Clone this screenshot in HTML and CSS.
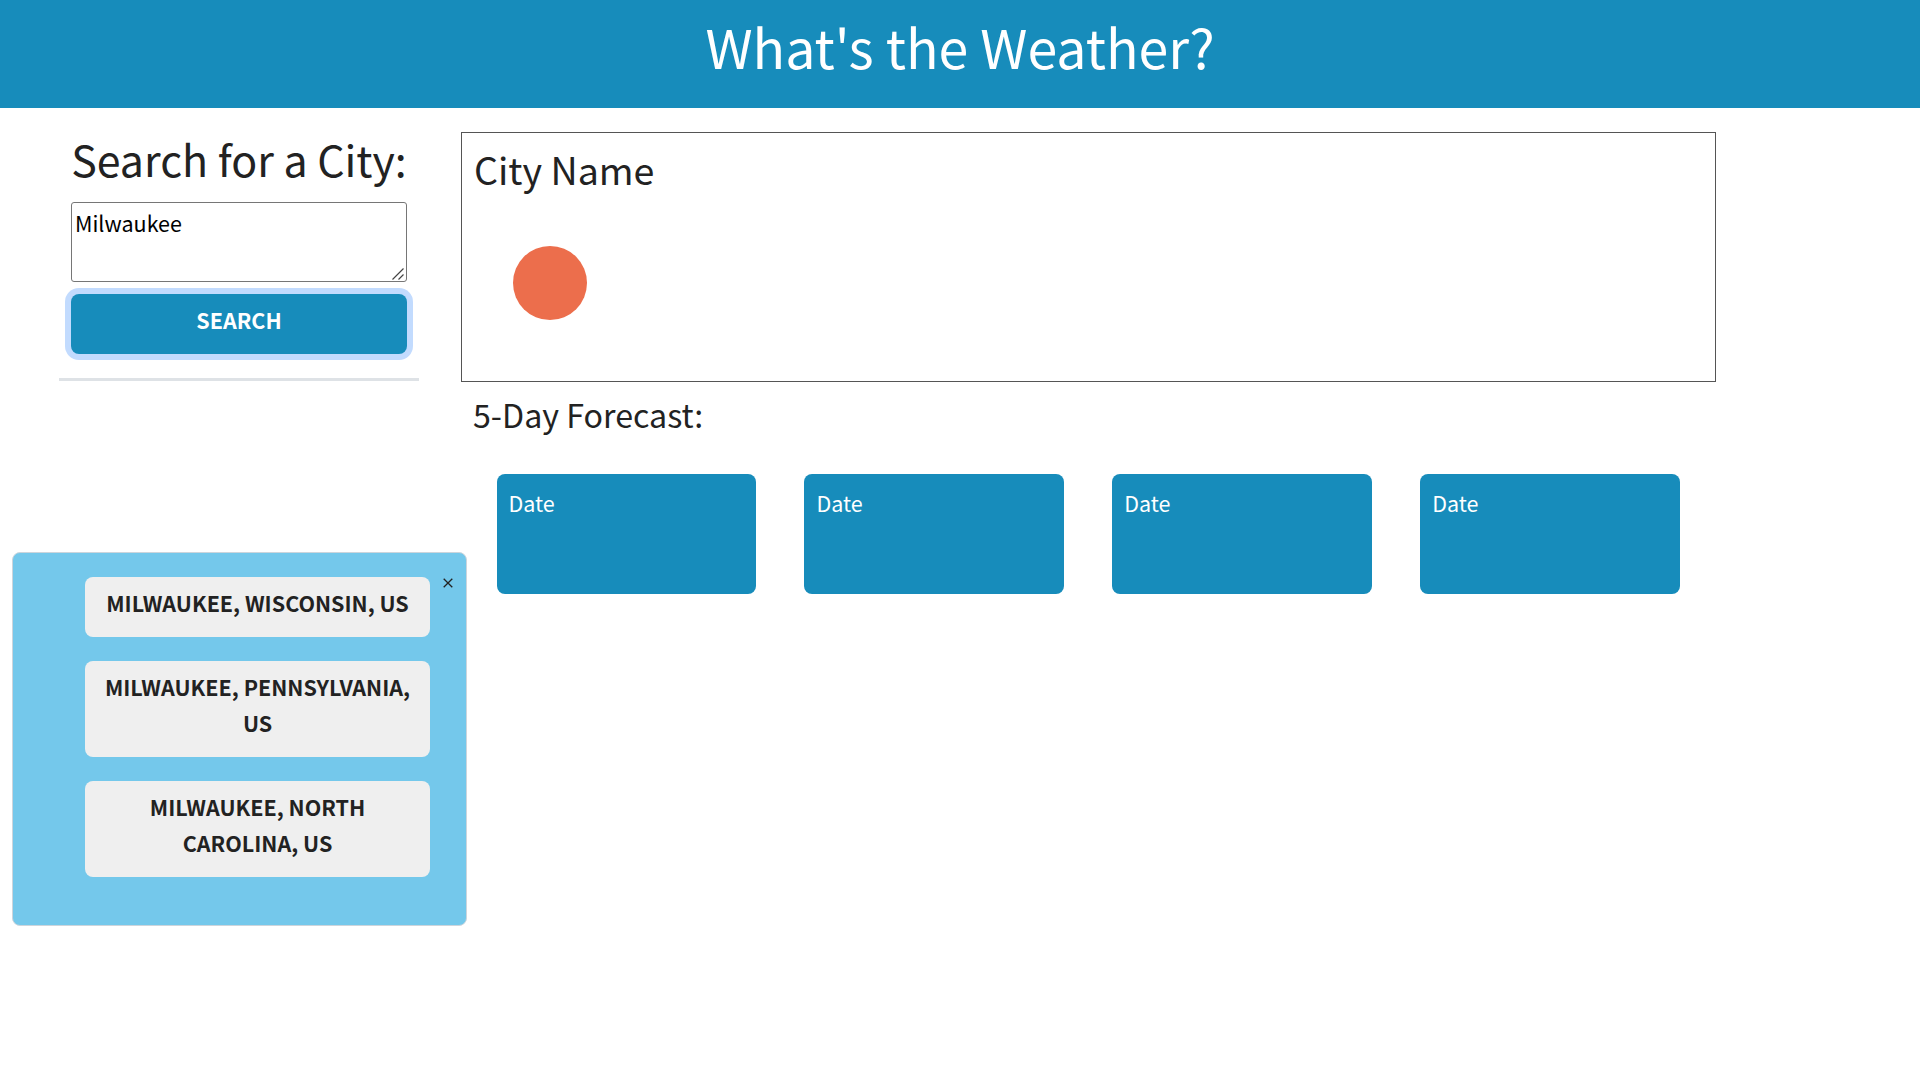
FILE: index.html
```html
<!DOCTYPE html>
<html lang="en">
<head>
<meta charset="utf-8">
<title>What's the Weather?</title>
<link rel="stylesheet" href="styles.css">
</head>
<body>
<header class="header"><h1 class="title">What's the Weather?</h1></header>
<div class="layout">
  <aside class="sidebar">
    <section class="search">
      <h2 class="search-title">Search for a City:</h2>
      <textarea class="search-input" aria-label="City">Milwaukee</textarea>
      <button class="search-button" type="button">SEARCH</button>
    </section>
    <hr class="divider">
    <section class="results">
      <div class="result-list">
        <button class="result" type="button">MILWAUKEE, WISCONSIN, US</button>
        <button class="result" type="button">MILWAUKEE, PENNSYLVANIA, US</button>
        <button class="result" type="button">MILWAUKEE, NORTH CAROLINA, US</button>
      </div>
      <button class="close" type="button" aria-label="Close"><svg width="10" height="10" viewBox="0 0 10 10"><path d="M.7.7l8.6 8.6M9.3.7L.7 9.3" stroke="#222" stroke-width="1.3" fill="none"/></svg></button>
    </section>
  </aside>
  <main class="main">
    <section class="current">
      <h2 class="city">City Name</h2>
      <div class="sun"></div>
    </section>
    <h3 class="forecast-title">5-Day Forecast:</h3>
    <div class="forecast">
      <div class="day">Date</div>
      <div class="day">Date</div>
      <div class="day">Date</div>
      <div class="day">Date</div>
    </div>
  </main>
</div>
</body>
</html>
```
FILE: styles.css
```css
* { box-sizing: border-box; }
body {
  margin: 0;
  background: #fff;
  color: #222;
  font-family: "Noto Sans CJK JP", "Noto Sans", sans-serif;
  font-size: 21.5px;
  line-height: 36px;
}
h1, h2, h3 { margin: 0; font-weight: 400; }
button { font: inherit; color: inherit; border: 0; }
.header { height: 108px; padding-top: 10px; background: #178cbb; color: #fff; text-align: center; }
.title { font-size: 53.7px; line-height: 72px; }
.layout { display: flex; align-items: flex-start; }
.sidebar { width: 461px; flex: none; }
.search { display: flex; flex-direction: column; margin: 21px 54px 0 71px; }
.search-title { font-size: 42.9px; line-height: 58px; height: 73px; text-align: center; white-space: nowrap; }
.search-input {
  height: 80px; margin: 0; padding: 2px 3px; border: 1px solid #767676; border-radius: 3px;
  font: inherit; color: #000; resize: none;
  background: #fff url("data:image/svg+xml,%3Csvg xmlns='http://www.w3.org/2000/svg' width='12' height='12'%3E%3Cpath d='M.5 11.5l11-11M6.5 11.5l5-5' stroke='%23444' stroke-width='1.2'/%3E%3C/svg%3E") no-repeat right 2px bottom 1px;
}
.search-button {
  height: 60px; margin-top: 12px; padding: 0 0 8px; border-radius: 8px; background: #178cbb; color: #fff;
  font-weight: 700; box-shadow: 0 0 0 6px #c2dbfe;
}
.divider { width: 360px; height: 3px; margin: 24px 0 0 59px; border: 0; background: #dee2e6; }
.results {
  display: flex; align-items: flex-start; width: 455px; height: 374px; margin: 171px 0 0 12px;
  padding: 24px 10px 0 72px; border: 1px solid #ccd5dc; border-radius: 8px; background: #74c8eb;
}
.result-list { display: flex; flex-direction: column; gap: 24px; width: 345px; flex: none; }
.result { padding: 8px 18px 16px; border-radius: 8px; background: #efefef; font-weight: 700; }
.close { display: flex; margin-left: 12.5px; padding: 1px 0; background: none; }
.main { width: 1255px; padding-top: 24px; }
.current { height: 250px; padding: 11px 12px; border: 1px solid #555; }
.city { font-size: 37.6px; line-height: 50px; }
.sun { width: 74px; height: 74px; margin: 52px 0 0 39px; border-radius: 50%; background: #ec6e4c; }
.forecast-title { height: 68px; padding: 11px 0 0 12px; font-size: 32.2px; line-height: 43px; }
.forecast { display: flex; gap: 48px; padding: 24px 36px 0 35.5px; }
.day { flex: 1; height: 120px; padding: 11px 12px; border-radius: 8px; background: #178cbb; color: #fff; }
```
